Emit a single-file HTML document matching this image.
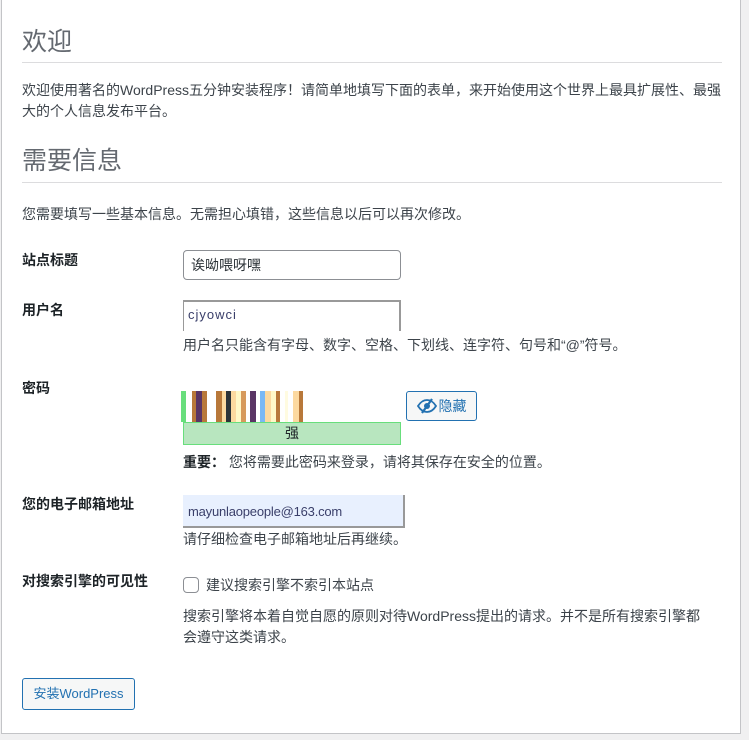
<!DOCTYPE html>
<html><head><meta charset="utf-8"><style>
html,body{margin:0;padding:0;background:#f0f0f1;width:749px;height:740px;overflow:hidden;font-family:"Liberation Sans","Noto Sans CJK SC",sans-serif;font-size:14px;color:#3c434a}
#card{position:absolute;left:1px;top:-2px;width:740px;height:736px;background:#fff;border:1px solid #c3c4c7;box-sizing:border-box}
.a{position:absolute;white-space:nowrap;line-height:20px}
h1{position:absolute;margin:0;font-weight:400;font-size:25px;color:#646970;line-height:30px;left:22px}
.hr{position:absolute;left:22px;width:700px;height:1px;background:#dcdcde}
.lbl{font-weight:700;color:#1d2327}
.inp{position:absolute;box-sizing:border-box;border:1px solid #8c8f94;border-radius:4px;background:#fff}
.btn{position:absolute;box-sizing:border-box;border:1px solid #2271b1;border-radius:3px;background:#f6f7f7;color:#2271b1;text-align:center}
</style></head><body>
<div id="card"></div>
<h1 style="top:27px">欢迎</h1>
<div class="hr" style="top:62px"></div>
<div class="a" style="left:22px;top:80px">欢迎使用著名的WordPress五分钟安装程序！请简单地填写下面的表单，来开始使用这个世界上最具扩展性、最强</div>
<div class="a" style="left:22px;top:101px">大的个人信息发布平台。</div>
<h1 style="top:146px">需要信息</h1>
<div class="hr" style="top:182px"></div>
<div class="a" style="left:22px;top:204px">您需要填写一些基本信息。无需担心填错，这些信息以后可以再次修改。</div>

<div class="a lbl" style="left:22px;top:250px">站点标题</div>
<div class="inp" style="left:183px;top:250px;width:218px;height:30px"></div>
<div class="a" style="left:191px;top:255px;color:#2c3338;font-size:14px">诶呦喂呀嘿</div>

<div class="a lbl" style="left:22px;top:300px">用户名</div>
<div class="inp" style="left:183px;top:300px;width:218px;height:31px;border-color:#999;border-radius:0;border-width:2px 2px 0 1px"></div>
<div class="a" style="left:188px;top:305px;color:#3a3f6a;letter-spacing:1px;font-size:13px">cjyowci</div>
<div class="a" style="left:183px;top:335px">用户名只能含有字母、数字、空格、下划线、连字符、句号和“@”符号。</div>

<div class="a lbl" style="left:22px;top:378px">密码</div>
<div style="position:absolute;left:181px;top:391px;height:31px;width:125px;background:linear-gradient(90deg,#68de7c 0 5px,#fff 5px 11px,#b8783a 11px 15px,#5a3565 15px 21px,#b8783a 21px 26px,#fff 26px 35px,#b8783a 35px 41px,#fcd9a0 41px 45px,#2c3338 45px 50px,#fcd9a0 50px 55px,#fff8c8 55px 60px,#d79a5c 60px 65px,#fff 65px 69px,#5a3565 69px 75px,#fff 75px 79px,#7ab8f5 79px 84px,#fcd9a0 84px 90px,#fff8c8 90px 95px,#b8783a 95px 99px,#fff 99px 104px,#fffbe0 104px 107px,#fff 107px 112px,#fcd9a0 112px 118px,#b8783a 118px 122px,#fff 122px)"></div>
<div style="position:absolute;left:183px;top:422px;width:218px;height:23px;box-sizing:border-box;background:#b8e6bf;border:1px solid #68de7c;text-align:center;line-height:21px;color:#1d2327">强</div>
<div class="btn" style="left:406px;top:391px;width:71px;height:30px;line-height:28px"><svg width="20" height="16" viewBox="0 0 20 16" style="vertical-align:-3px;margin-right:2px"><path d="M1 8c2.5-4 5.5-6 9-6s6.5 2 9 6c-2.5 4-5.5 6-9 6s-6.5-2-9-6z" fill="none" stroke="#2271b1" stroke-width="1.8"/><circle cx="10" cy="8" r="3" fill="#2271b1"/><path d="M15 1L5 15" stroke="#2271b1" stroke-width="2.2"/></svg>隐藏</div>
<div class="a" style="left:183px;top:452px"><b style="color:#1d2327">重要：</b> 您将需要此密码来登录，请将其保存在安全的位置。</div>

<div class="a lbl" style="left:22px;top:494px">您的电子邮箱地址</div>
<div class="inp" style="left:183px;top:495px;width:222px;height:33px;background:#e8f0fe;border-radius:0;border-color:#999;border-width:0 2px 2px 0"></div>
<div class="a" style="left:188px;top:502px;color:#3a3f6a;font-size:13px;letter-spacing:-0.2px">mayunlaopeople@163.com</div>
<div class="a" style="left:183px;top:529px">请仔细检查电子邮箱地址后再继续。</div>

<div class="a lbl" style="left:22px;top:571px">对搜索引擎的可见性</div>
<div style="position:absolute;left:183px;top:577px;width:16px;height:16px;box-sizing:border-box;border:1px solid #8c8f94;border-radius:4px;background:#fff"></div>
<div class="a" style="left:206px;top:575px">建议搜索引擎不索引本站点</div>
<div class="a" style="left:183px;top:606px">搜索引擎将本着自觉自愿的原则对待WordPress提出的请求。并不是所有搜索引擎都</div>
<div class="a" style="left:183px;top:627px">会遵守这类请求。</div>

<div class="btn" style="left:22px;top:678px;width:113px;height:32px;line-height:30px;font-size:13px">安装WordPress</div>
</body></html>
